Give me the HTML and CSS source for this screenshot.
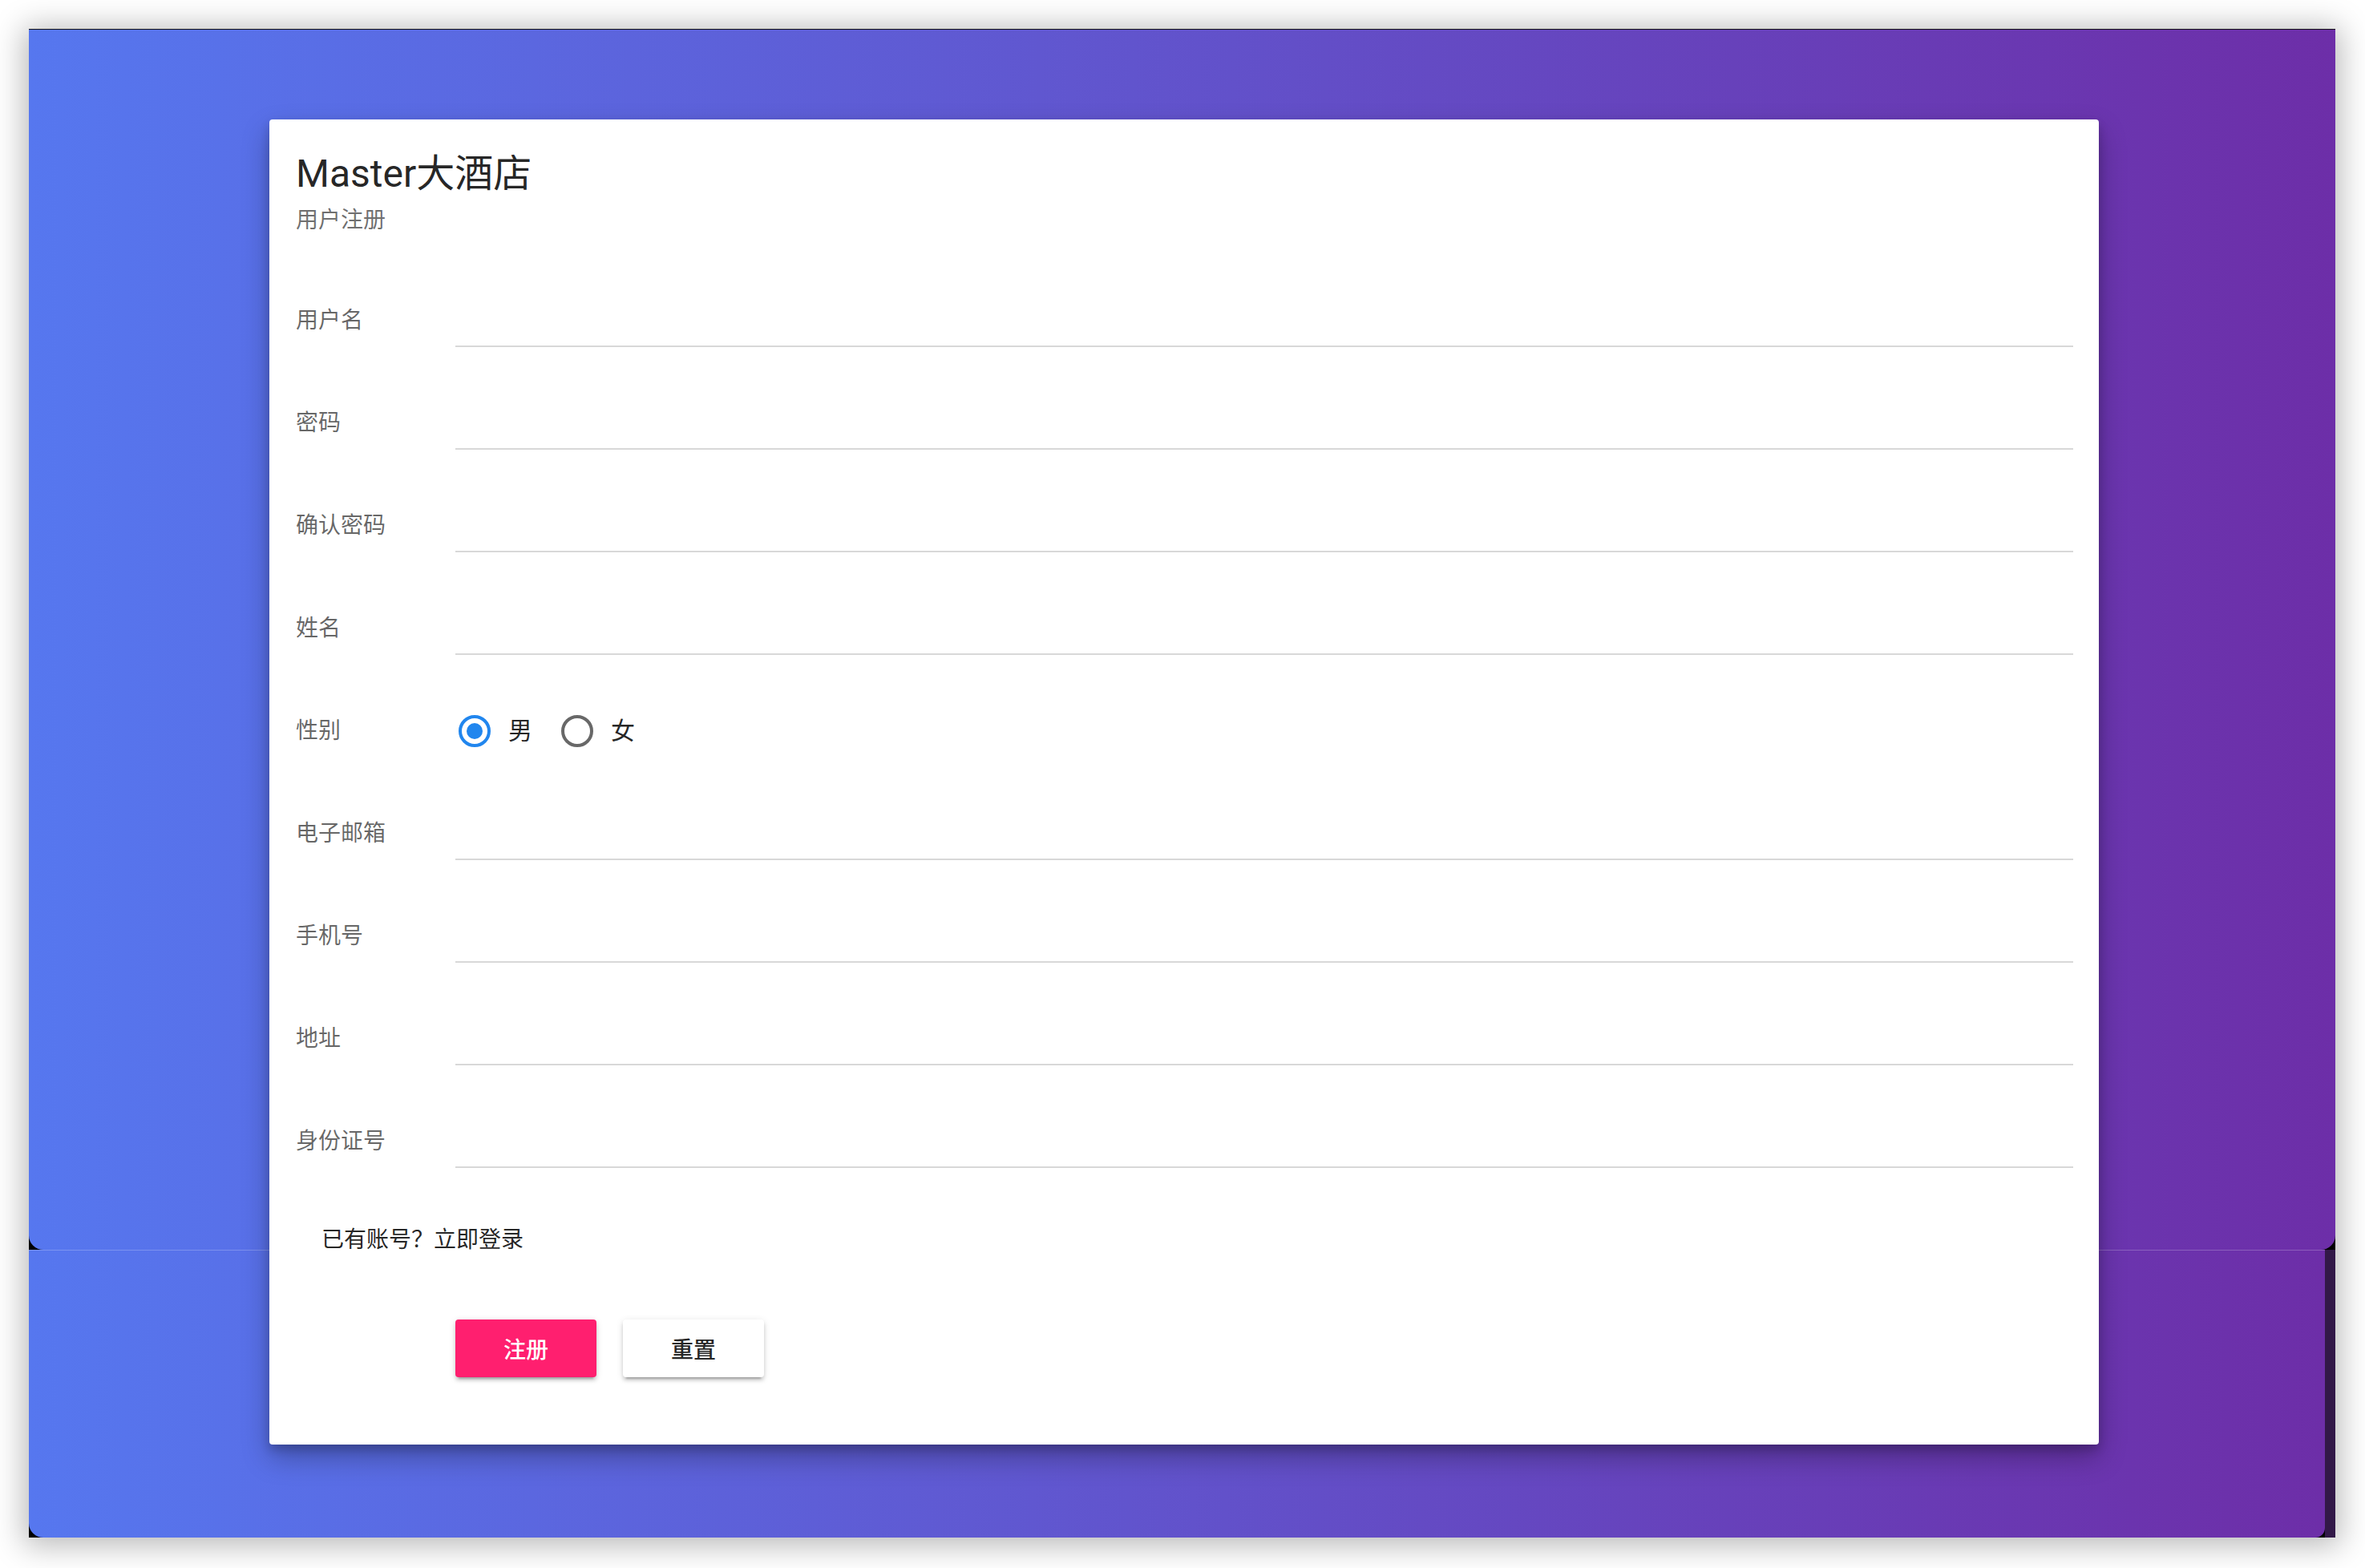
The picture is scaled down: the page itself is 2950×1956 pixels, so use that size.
FILE: index.html
```html
<!DOCTYPE html>
<html lang="zh-CN">
<head>
<meta charset="utf-8">
<title>Master大酒店 - 用户注册</title>
<link rel="stylesheet" href="styles.css">
</head>
<body>
<div class="window">
  <div class="panel-top"></div>
  <div class="lower">
    <div class="panel-bottom"></div>
    <div class="strip"></div>
  </div>
  <main class="card">
    <h1 class="title">Master大酒店</h1>
    <div class="subtitle">用户注册</div>
    <form class="form">
      <div class="row"><label class="label">用户名</label><input class="field" type="text"></div>
      <div class="row"><label class="label">密码</label><input class="field" type="password"></div>
      <div class="row"><label class="label">确认密码</label><input class="field" type="password"></div>
      <div class="row"><label class="label">姓名</label><input class="field" type="text"></div>
      <div class="row"><label class="label">性别</label>
        <div class="radios">
          <div class="opt"><span class="radio checked"></span><span class="opt-text">男</span></div>
          <div class="opt"><span class="radio"></span><span class="opt-text">女</span></div>
        </div>
      </div>
      <div class="row"><label class="label">电子邮箱</label><input class="field" type="text"></div>
      <div class="row"><label class="label">手机号</label><input class="field" type="text"></div>
      <div class="row"><label class="label">地址</label><input class="field" type="text"></div>
      <div class="row"><label class="label">身份证号</label><input class="field" type="text"></div>
    </form>
    <div class="login">已有账号？立即登录</div>
    <div class="actions">
      <button class="btn btn-primary" type="button">注册</button>
      <button class="btn btn-plain" type="button">重置</button>
    </div>
  </main>
</div>
</body>
</html>
```
FILE: styles.css
```css
html, body {
  margin: 0;
  background: #ffffff;
}
body {
  padding: 36px 37px 38px 36px;
  font-family: Roboto, "Noto Sans CJK SC", sans-serif;
}
.window {
  display: grid;
  grid-template-columns: 1fr;
  grid-template-rows: 1522px 359px;
  border-top: 1px solid #151515;
  background: #000;
  box-shadow: 0 4px 36px 6px rgba(0, 0, 0, 0.28);
}
.panel-top {
  grid-row: 1;
  grid-column: 1;
  background: linear-gradient(to right, #5677ef, #6d2ea8);
  border-radius: 0 0 18px 18px;
}
.lower {
  grid-row: 2;
  grid-column: 1;
  display: flex;
  background: #000;
}
.panel-bottom {
  flex: 1;
  background: linear-gradient(to right, #5677ef, #6d2ea8);
  border-top: 1px solid rgba(255, 255, 255, 0.22);
  border-radius: 0 0 12px 18px;
}
.strip {
  width: 13px;
  background: #321848;
}
.card {
  grid-row: 1 / 3;
  grid-column: 1;
  justify-self: start;
  align-self: start;
  z-index: 1;
  margin: 112px 0 0 300px;
  width: 2282px;
  box-sizing: border-box;
  padding: 36px 32px 84px 33px;
  background: #fff;
  border-radius: 4px;
  box-shadow: 0 16px 34px rgba(0, 0, 0, 0.28), 0 6px 12px rgba(0, 0, 0, 0.18);
}
.title {
  margin: 0;
  font-size: 48px;
  line-height: 64px;
  font-weight: 400;
  color: rgba(0, 0, 0, 0.87);
}
.subtitle {
  margin-top: 6px;
  font-size: 28px;
  line-height: 40px;
  color: rgba(0, 0, 0, 0.58);
}
.form {
  margin: 72px 0 0;
  display: flex;
  flex-direction: column;
  gap: 62px;
}
.row {
  display: grid;
  grid-template-columns: 199px 1fr;
  align-items: center;
  height: 66px;
}
.label {
  font-size: 28px;
  line-height: 40px;
  color: rgba(0, 0, 0, 0.6);
}
.field {
  display: block;
  width: 100%;
  height: 66px;
  box-sizing: border-box;
  margin: 0;
  padding: 0;
  border: none;
  border-bottom: 2px solid #d8d8d8;
  background: transparent;
  outline: none;
  font: inherit;
  font-size: 28px;
}
.radios {
  display: flex;
  align-items: center;
}
.opt {
  display: flex;
  align-items: center;
  margin-right: 32px;
}
.radio {
  width: 40px;
  height: 40px;
  margin: 4px;
  box-sizing: border-box;
  border: 4px solid #686868;
  border-radius: 50%;
  display: flex;
  align-items: center;
  justify-content: center;
}
.radio.checked {
  border-color: #2186ee;
}
.radio.checked::after {
  content: "";
  width: 20px;
  height: 20px;
  border-radius: 50%;
  background: #2186ee;
}
.opt-text {
  margin-left: 18px;
  font-size: 30px;
  line-height: 40px;
  color: rgba(0, 0, 0, 0.87);
}
.login {
  margin-top: 70px;
  padding-left: 32px;
  font-size: 28px;
  line-height: 40px;
  color: rgba(0, 0, 0, 0.87);
}
.actions {
  margin-top: 79px;
  padding-left: 199px;
  display: flex;
  gap: 33px;
}
.btn {
  width: 176px;
  height: 72px;
  border: none;
  border-radius: 4px;
  font-family: Roboto, "Noto Sans CJK SC", sans-serif;
  font-size: 28px;
  font-weight: 500;
  cursor: pointer;
  box-shadow: 0 6px 2px -4px rgba(0, 0, 0, 0.2), 0 4px 4px 0 rgba(0, 0, 0, 0.14), 0 2px 10px 0 rgba(0, 0, 0, 0.12);
}
.btn-primary {
  background: #ff1f6f;
  color: #fff;
}
.btn-plain {
  background: #fff;
  color: rgba(0, 0, 0, 0.87);
}
```
